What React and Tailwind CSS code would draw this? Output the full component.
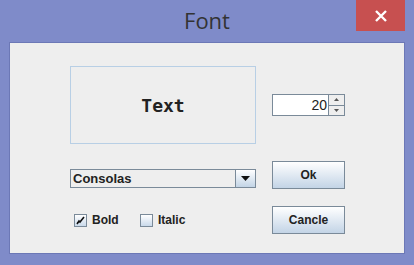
import React from 'react';

const sans = { fontFamily: '"Liberation Sans", Arial, sans-serif' };

const Check = ({ checked, label }) => (
  <div className="w-[66px] flex items-center gap-[5px]">
    <div className="w-[13px] h-[13px] border border-[#7a8a99] bg-gradient-to-b from-[#ffffff] to-[#c9d9ea] flex items-center justify-center">
      {checked && (
        <svg width="9" height="9" viewBox="0 0 9 9">
          <path d="M1 8 L3 5 L4 6 L8 1" stroke="#111" strokeWidth="1.6" fill="none" />
          <path d="M1 8 L1 6 L3 6 Z" fill="#111" />
        </svg>
      )}
    </div>
    <span className="text-[12px] font-bold text-[#222]">{label}</span>
  </div>
);

const Button = ({ children }) => (
  <button className="w-[73px] h-[28px] border border-[#7a8a99] bg-gradient-to-b from-[#ffffff] to-[#c3d4e6] text-[12px] font-bold text-[#222]">
    {children}
  </button>
);

export default function App() {
  return (
    <div className="w-[414px] h-[265px] bg-[#7f8bc9] flex flex-col" style={sans}>
      {/* title bar */}
      <div className="relative h-[42px] flex items-start justify-center">
        <span className="mt-[4px] text-[22px] text-[#333]" style={{ fontFamily: '"Open Sans", "Noto Sans", sans-serif' }}>
          Font
        </span>
        <div className="absolute right-[9px] top-0 w-[49px] h-[31px] bg-[#c75050] flex items-center justify-center">
          <svg width="14" height="12" viewBox="0 0 14 12">
            <path d="M2 1 L12 11 M12 1 L2 11" stroke="#fff" strokeWidth="2.4" />
          </svg>
        </div>
      </div>

      {/* body */}
      <div className="mx-[9px] h-[212px] bg-[#eeeeee] border border-[#6c78b6] pt-[23px] pl-[60px]">
        <div className="flex items-center gap-[16px]">
          <div className="w-[186px] h-[78px] border border-[#b8cfe5] flex items-center justify-center">
            <span className="text-[18px] font-bold text-[#222]" style={{ fontFamily: '"DejaVu Sans Mono", "Liberation Mono", monospace' }}>
              Text
            </span>
          </div>
          <div className="w-[73px] h-[22px] border border-[#7a8a99] bg-white flex">
            <div className="flex-1 flex items-center justify-end pr-[1px] text-[14px] text-[#222]">20</div>
            <div className="w-[16px] border-l border-[#7a8a99] flex flex-col bg-[#eeeeee]">
              <div className="flex-1 border-b border-[#7a8a99] flex items-center justify-center">
                <svg width="5" height="3" viewBox="0 0 5 3"><path d="M0 3 L2.5 0 L5 3 Z" fill="#555" /></svg>
              </div>
              <div className="flex-1 flex items-center justify-center">
                <svg width="5" height="3" viewBox="0 0 5 3"><path d="M0 0 L5 0 L2.5 3 Z" fill="#555" /></svg>
              </div>
            </div>
          </div>
        </div>

        <div className="flex items-end gap-[16px] mt-[17px]">
          <div className="w-[186px] h-[19px] mb-[1px] border border-[#7a8a99] flex">
            <div className="flex-1 flex items-center pl-[2px] text-[13px] font-bold text-[#222] bg-[#eeeeee]">Consolas</div>
            <div className="w-[20px] border-l border-[#7a8a99] bg-gradient-to-b from-[#ffffff] to-[#c3d4e6] flex items-center justify-center">
              <svg width="9" height="5" viewBox="0 0 9 5"><path d="M0 0 L9 0 L4.5 5 Z" fill="#111" /></svg>
            </div>
          </div>
          <Button>Ok</Button>
        </div>

        <div className="flex items-center gap-[16px] mt-[17px]">
          <div className="w-[186px] flex items-center pl-[4px]">
            <Check checked label="Bold" />
            <Check label="Italic" />
          </div>
          <Button>Cancle</Button>
        </div>
      </div>
    </div>
  );
}
